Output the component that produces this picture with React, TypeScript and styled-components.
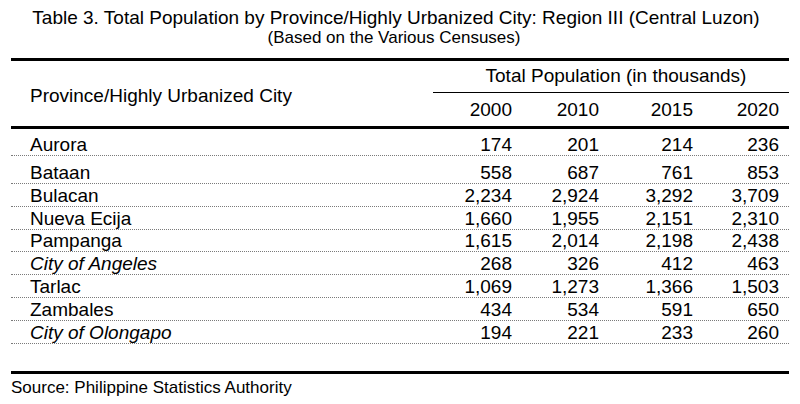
import React from "react";
import styled, { createGlobalStyle } from "styled-components";

const GlobalStyle = createGlobalStyle`
  html, body { margin: 0; padding: 0; background: #fff; }
  body { font-family: "Liberation Sans", Arial, sans-serif; color: #000; }
`;

const Page = styled.div`
  width: 800px;
  padding-top: 8px;
  box-sizing: border-box;
`;

const Title = styled.div`
  font-size: 19px;
  line-height: 20px;
  text-align: center;
  padding: 0 19px 0 11px;
`;

const Subtitle = styled.div`
  font-size: 17px;
  line-height: 20px;
  text-align: center;
  padding: 0 23px 0 11px;
`;

const Table = styled.div`
  margin: 10px 11px 0;
  border-top: 3px solid #000;
  font-size: 19px;
  line-height: 20px;
`;

const cols = "422px 89px 87px 94px 86px";

const Header = styled.div`
  display: grid;
  grid-template-columns: ${cols};
  grid-template-rows: 32px 33px;
  border-bottom: 3px solid #000;
`;

const HeadLabel = styled.div`
  grid-row: 1 / span 2;
  grid-column: 1;
  padding: 25px 0 0 19px;
`;

const Spanner = styled.div`
  grid-row: 1;
  grid-column: 2 / span 4;
  text-align: center;
  padding: 5px 0 0 10px;
  border-bottom: 1px solid #000;
`;

const Year = styled.div`
  grid-row: 2;
  text-align: right;
  padding: 7px 10px 0 0;
`;

const Row = styled.div<{ $pad: number }>`
  display: grid;
  grid-template-columns: ${cols};
  padding-top: ${(p) => p.$pad}px;
  border-bottom: 1px dotted #7a7a7a;
`;

const Label = styled.div<{ $city?: boolean }>`
  padding-left: 19px;
  font-style: ${(p) => (p.$city ? "italic" : "normal")};
`;

const Num = styled.div`
  text-align: right;
  padding-right: 10px;
`;

const BottomRule = styled.div`
  margin: 27px 11px 0;
  border-top: 3px solid #000;
`;

const Source = styled.div`
  font-size: 17px;
  line-height: 20px;
  padding: 4px 0 0 11px;
`;

const years = ["2000", "2010", "2015", "2020"];

const data: { name: string; city?: boolean; v: string[] }[] = [
  { name: "Aurora", v: ["174", "201", "214", "236"] },
  { name: "Bataan", v: ["558", "687", "761", "853"] },
  { name: "Bulacan", v: ["2,234", "2,924", "3,292", "3,709"] },
  { name: "Nueva Ecija", v: ["1,660", "1,955", "2,151", "2,310"] },
  { name: "Pampanga", v: ["1,615", "2,014", "2,198", "2,438"] },
  { name: "City of Angeles", city: true, v: ["268", "326", "412", "463"] },
  { name: "Tarlac", v: ["1,069", "1,273", "1,366", "1,503"] },
  { name: "Zambales", v: ["434", "534", "591", "650"] },
  { name: "City of Olongapo", city: true, v: ["194", "221", "233", "260"] },
];

const pads = [6, 7, 1.8, 1.8, 1.8, 1.8, 1.8, 1.8, 1.8];

export default function App() {
  return (
    <>
      <GlobalStyle />
      <Page>
        <Title>
          Table 3. Total Population by Province/Highly Urbanized City: Region III (Central Luzon)
        </Title>
        <Subtitle>(Based on the Various Censuses)</Subtitle>
        <Table>
          <Header>
            <HeadLabel>Province/Highly Urbanized City</HeadLabel>
            <Spanner>Total Population (in thousands)</Spanner>
            {years.map((y) => (
              <Year key={y}>{y}</Year>
            ))}
          </Header>
          {data.map((r, i) => (
            <Row key={r.name} $pad={pads[i]}>
              <Label $city={r.city}>{r.name}</Label>
              {r.v.map((n, j) => (
                <Num key={j}>{n}</Num>
              ))}
            </Row>
          ))}
        </Table>
        <BottomRule />
        <Source>Source: Philippine Statistics Authority</Source>
      </Page>
    </>
  );
}
